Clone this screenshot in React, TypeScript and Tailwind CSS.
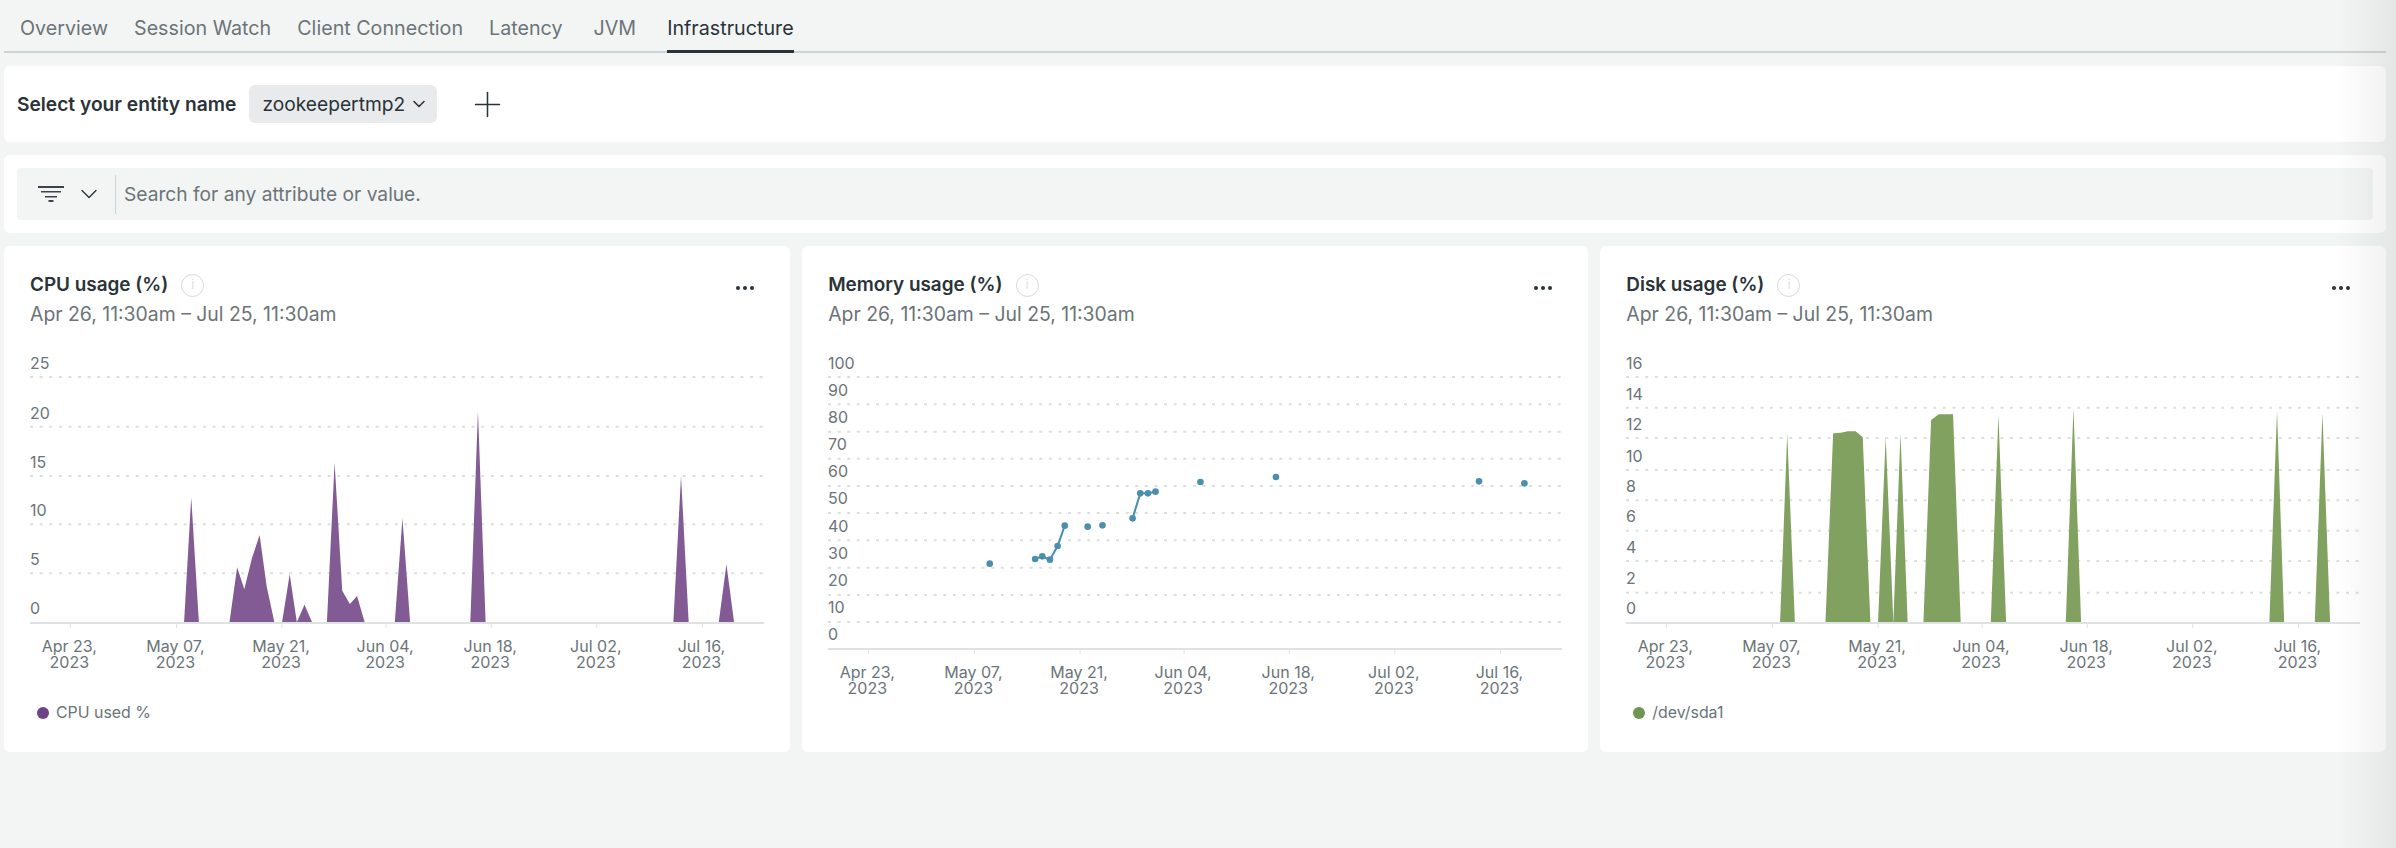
import { ChevronDown, Plus } from 'lucide-react'

const tabs = ['Overview', 'Session Watch', 'Client Connection', 'Latency', 'JVM', 'Infrastructure']

const dates = [
  ['Apr 23,', '2023'],
  ['May 07,', '2023'],
  ['May 21,', '2023'],
  ['Jun 04,', '2023'],
  ['Jun 18,', '2023'],
  ['Jul 02,', '2023'],
  ['Jul 16,', '2023'],
]

type Point = [number, number]

// traced from the chart, x in px from the plot's left edge and y in px from the svg top
const toX = (v: number) => (v - 59) / 1.96
const toY = (v: number) => v / 3 - 112

const BASE = 1147

const cpuAreas: Point[][] = [
  [[361, BASE], [375, 772], [390, BASE]],
  [[450, BASE], [465, 982], [479, 1048], [494, 955], [509, 885], [523, 1040], [538, BASE]],
  [[553, BASE], [568, 1003], [582, BASE]],
  [[582, BASE], [597, 1094], [612, BASE]],
  [[641, BASE], [656, 668], [671, 1052], [686, 1092], [700, 1068], [708, 1110], [715, BASE]],
  [[774, BASE], [789, 835], [804, BASE]],
  [[922, BASE], [937, 513], [952, BASE]],
  [[1320, BASE], [1335, 708], [1350, BASE]],
  [[1409, BASE], [1424, 973], [1439, BASE]],
]

const diskAreas: Point[][] = [
  [[361, BASE], [375, 580], [390, BASE]],
  [[450, BASE], [465, 580], [480, 578], [494, 574], [509, 574], [523, 592], [538, BASE]],
  [[553, BASE], [568, 590], [583, BASE]],
  [[583, BASE], [597, 580], [611, BASE]],
  [[642, BASE], [657, 540], [672, 523], [700, 523], [715, BASE]],
  [[774, BASE], [789, 525], [804, BASE]],
  [[921, BASE], [936, 505], [951, BASE]],
  [[1320, BASE], [1335, 513], [1349, BASE]],
  [[1409, BASE], [1424, 520], [1439, BASE]],
]

const memorySegments: Point[][] = [
  [[376, 971]],
  [[465, 957], [479, 949], [494, 959], [509, 918], [523, 857]],
  [[568, 860]],
  [[597, 856]],
  [[656, 835], [671, 760], [686, 760], [701, 755]],
  [[789, 726]],
  [[937, 711]],
  [[1335, 724]],
  [[1424, 730]],
]

const cpuTicks = { grid: [411, 560, 708, 853, 1000], labels: [['25', 368], ['20', 518], ['15', 665], ['10', 811], ['5', 958], ['0', 1105]] as [string, number][] }
const diskTicks = { grid: [411, 503, 594, 690, 781, 872, 963, 1058], labels: [['16', 368], ['14', 461], ['12', 553], ['10', 647], ['8', 737], ['6', 829], ['4', 921], ['2', 1015], ['0', 1105]] as [string, number][] }
const memoryTicks = { grid: [411, 493, 575, 656, 738, 819, 901, 983, 1065, 1146], labels: [['100', 368], ['90', 451], ['80', 532], ['70', 613], ['60', 694], ['50', 775], ['40', 859], ['30', 940], ['20', 1021], ['10', 1102], ['0', 1183]] as [string, number][] }

const tickXs = [138, 346, 553, 757, 963, 1170, 1377]

function Chart({
  axis,
  ticks,
  children,
}: {
  axis: number
  ticks: { grid: number[]; labels: [string, number][] }
  children: React.ReactNode
}) {
  return (
    <svg width={736} height={345} className="block font-['Inter',sans-serif]">
      {ticks.grid.map((y) => (
        <line key={y} x1={0} x2={733} y1={toY(y)} y2={toY(y)} stroke="#dcdfe0" strokeWidth={2} strokeDasharray="3 6.6" />
      ))}
      {ticks.labels.map(([label, y]) => (
        <text key={label} x={0} y={toY(y)} dominantBaseline="central" fontSize={16} fill="#6b7478">
          {label}
        </text>
      ))}
      {children}
      <line x1={0} x2={734} y1={toY(axis)} y2={toY(axis)} stroke="#dfe2e3" strokeWidth={2} />
      {tickXs.map((x, i) => (
        <g key={x}>
          <line x1={toX(x)} x2={toX(x)} y1={toY(axis)} y2={toY(axis) + 5} stroke="#dfe2e3" />
          <text x={toX(x) - 1} y={toY(axis) + 23} textAnchor="middle" dominantBaseline="central" fontSize={16} fill="#6b7478">
            {dates[i][0]}
          </text>
          <text x={toX(x) - 1} y={toY(axis) + 39} textAnchor="middle" dominantBaseline="central" fontSize={16} fill="#6b7478">
            {dates[i][1]}
          </text>
        </g>
      ))}
    </svg>
  )
}

function ChartCard({
  title,
  legend,
  legendClass,
  children,
}: {
  title: string
  legend?: string
  legendClass?: string
  children: React.ReactNode
}) {
  return (
    <div className="relative h-[506px] rounded-md bg-white pl-[26px] pt-[25px]">
      <div className="flex items-center gap-[13px]">
        <h3 className="text-[18.9px] leading-[28px] font-semibold text-[#293338]">{title}</h3>
        <span className="flex h-[23px] w-[23px] items-center justify-center rounded-full border border-[#d5d9da] text-[13px] font-light text-[#d5d9da]">
          i
        </span>
      </div>
      <button className="absolute right-[36px] top-[40px] flex gap-[3px]">
        <span className="h-1 w-1 rounded-full bg-[#293338]" />
        <span className="h-1 w-1 rounded-full bg-[#293338]" />
        <span className="h-1 w-1 rounded-full bg-[#293338]" />
      </button>
      <p className="mt-[1px] text-[19.4px] leading-[28px] text-[#6b7478]">Apr 26, 11:30am – Jul 25, 11:30am</p>
      <div className="mt-[24px]">{children}</div>
      {legend && (
        <div className="absolute bottom-[31px] left-[33px] flex items-center gap-[7px]">
          <span className={`h-[12px] w-[12px] rounded-full ${legendClass}`} />
          <span className="text-[15.9px] leading-[16px] text-[#6b7478]">{legend}</span>
        </div>
      )}
    </div>
  )
}

function Areas({ areas, className }: { areas: Point[][]; className: string }) {
  return (
    <>
      {areas.map((area, i) => (
        <polygon key={i} className={className} points={area.map(([x, y]) => `${toX(x)},${toY(y)}`).join(' ')} />
      ))}
    </>
  )
}

export default function App() {
  return (
    <div className="relative h-[848px] overflow-hidden bg-[#f3f5f4] font-['Inter',sans-serif]">
      <div className="pl-[4px] pr-[10px]">
        <nav className="flex h-[53px] gap-[26px] border-b-2 border-[#cdd4d6] pl-[16px]">
          {tabs.map((tab) => (
            <span
              key={tab}
              className={
                tab === 'Infrastructure'
                  ? '-mb-[2px] ml-[5px] h-[53px] border-b-[3px] border-[#293338] pt-[15px] text-[19.7px] leading-[26px] text-[#293338]'
                  : tab === 'JVM'
                    ? 'ml-[5px] pt-[15px] text-[19.7px] leading-[26px] text-[#6b7478]'
                    : 'pt-[15px] text-[19.7px] leading-[26px] text-[#6b7478]'
              }
            >
              {tab}
            </span>
          ))}
        </nav>

        <section className="mt-[13px] flex h-[76px] items-center rounded-md bg-white pl-[13px]">
          <span className="text-[19.2px] font-semibold text-[#293338]">Select your entity name</span>
          <button className="ml-[13px] flex h-[38px] w-[188px] items-center gap-[4px] rounded-md bg-[#e8eaec] pl-[13px] text-[19.2px] text-[#293338]">
            zookeepertmp2
            <ChevronDown size={20} strokeWidth={1.9} />
          </button>
          <Plus size={41} strokeWidth={0.9} className="ml-[30px] text-[#293338]" />
        </section>

        <section className="mt-[13px] h-[78px] rounded-md bg-white px-[13px] py-[13px]">
          <div className="flex h-[52px] items-center rounded-sm bg-[#f3f5f4]">
            <svg width="26" height="16" viewBox="0 0 26 16" className="ml-[21px] text-[#3c4449]" fill="currentColor">
              <rect x="0" y="0" width="26" height="2" />
              <rect x="3" y="5" width="20" height="1.5" />
              <rect x="7" y="10" width="12" height="1.5" />
              <rect x="10.5" y="14" width="5" height="2" />
            </svg>
            <ChevronDown size={28} strokeWidth={1.2} className="ml-[11px] text-[#293338]" />
            <span className="ml-[12px] h-[39px] w-px bg-[#cdd4d6]" />
            <span className="ml-[8px] text-[19.2px] text-[#6b7478]">Search for any attribute or value.</span>
          </div>
        </section>

        <div className="mt-[13px] grid grid-cols-3 gap-[12.5px]">
          <ChartCard title="CPU usage (%)" legend="CPU used %" legendClass="bg-[#6f4387]">
            <Chart axis={1149} ticks={cpuTicks}>
              <Areas areas={cpuAreas} className="fill-[#825b94]" />
            </Chart>
          </ChartCard>
          <ChartCard title="Memory usage (%)">
            <Chart axis={1227} ticks={memoryTicks}>
              {memorySegments.map((segment, i) => (
                <g key={i}>
                  <polyline
                    points={segment.map(([x, y]) => `${toX(x)},${toY(y)}`).join(' ')}
                    fill="none"
                    stroke="#4a8fab"
                    strokeWidth={2}
                  />
                  {segment.map(([x, y]) => (
                    <circle key={x} cx={toX(x)} cy={toY(y)} r={3.3} fill="#4a8fab" />
                  ))}
                </g>
              ))}
            </Chart>
          </ChartCard>
          <ChartCard title="Disk usage (%)" legend="/dev/sda1" legendClass="bg-[#6f9650]">
            <Chart axis={1149} ticks={diskTicks}>
              <Areas areas={diskAreas} className="fill-[#81a160]" />
            </Chart>
          </ChartCard>
        </div>
      </div>

      {/* fade along the right edge of the screen */}
      <div className="pointer-events-none absolute inset-y-0 right-0 w-[60px] bg-gradient-to-r from-transparent to-black/6" />
    </div>
  )
}
